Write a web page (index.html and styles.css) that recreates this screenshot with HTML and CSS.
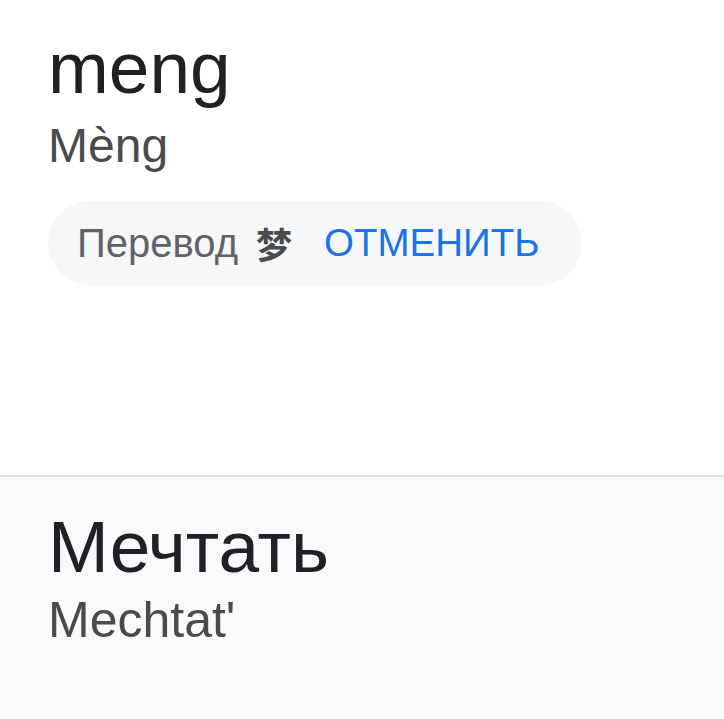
FILE: index.html
```html
<!DOCTYPE html>
<html lang="ru">
<head>
  <meta charset="UTF-8">
  <title>Перевод</title>
  <link rel="stylesheet" href="styles.css">
</head>
<body>
  <div class="source">
    <div class="word">meng</div>
    <div class="translit">Mèng</div>
    <div class="chip">
      <span class="chip-label">Перевод</span>
      <span class="chip-char">梦</span>
      <span class="chip-action">ОТМЕНИТЬ</span>
    </div>
  </div>

  <div class="result">
    <div class="word">Мечтать</div>
    <div class="translit">Mechtat'</div>
  </div>
</body>
</html>
```

FILE: styles.css
```css
body {
  margin: 0;
  font-family: "Liberation Sans", Arial, "Noto Sans CJK SC", sans-serif;
  background: #fff;
  color: #202124;
}
.source {
  padding: 20px 48px 0;
  height: 455px;
  border-bottom: 2px solid #dcdde1;
}
.result {
  background: #f8f9fa;
  padding: 22px 48px 0;
  height: 241px;
}
.word {
  font-size: 73px;
  line-height: 96px;
}
.translit {
  font-size: 48px;
  line-height: 60px;
  color: #4a4a4a;
}
.result .translit {
  font-size: 50px;
  line-height: 50px;
}
.chip {
  display: inline-flex;
  align-items: center;
  height: 84px;
  margin-top: 25px;
  padding: 0 42px 0 29px;
  border-radius: 42px;
  background: #f6f7f9;
  font-size: 38.5px;
}
.chip-label {
  font-size: 40px;
  color: #5f6368;
}
.chip-char {
  margin-left: 18px;
  font-family: "Noto Sans CJK SC", sans-serif;
  font-weight: bold;
  font-size: 36px;
  color: #4a4a4a;
}
.chip-action {
  margin-left: 32px;
  color: #1a73e8;
}
```
